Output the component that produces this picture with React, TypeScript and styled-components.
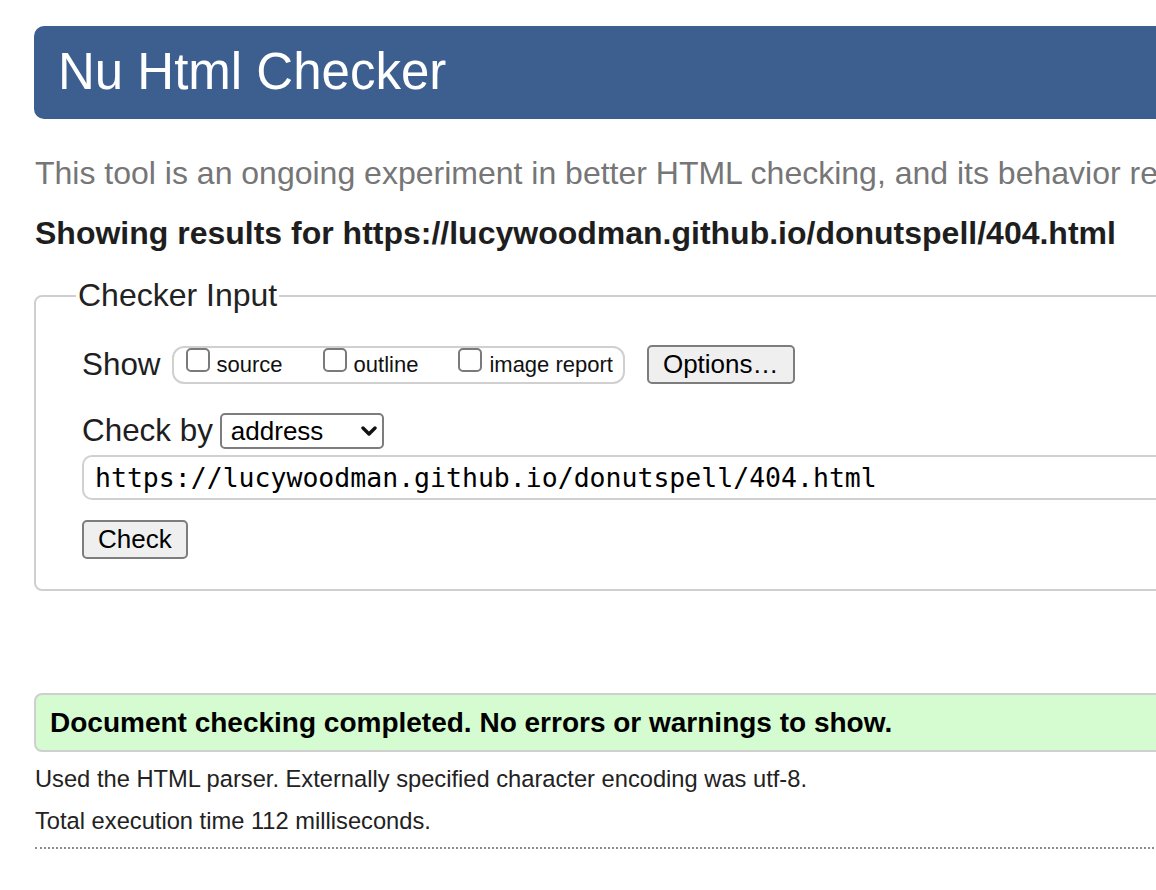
import styled, { createGlobalStyle } from "styled-components";

const GlobalStyle = createGlobalStyle`
  html, body {
    margin: 0;
    padding: 0;
    background: #fff;
    overflow: hidden;
  }
  body {
    font-family: "Liberation Sans", Arial, Helvetica, sans-serif;
    color: #222;
  }
`;

const Page = styled.div`
  width: 1400px;
  padding: 26px 0 0 34px;
  display: flex;
  flex-direction: column;
`;

const Header = styled.h1`
  margin: 0;
  height: 93px;
  display: flex;
  align-items: center;
  padding: 0 0 2px 24px;
  box-sizing: border-box;
  background: #3d5f90;
  border-radius: 10px;
  color: #fff;
  font-size: 51px;
  font-weight: 400;
`;

const Intro = styled.p`
  margin: 34px 0 0 1px;
  font-size: 32px;
  line-height: 40px;
  color: #767676;
  white-space: nowrap;
`;

const ResultsFor = styled.h2`
  margin: 20px 0 0 1px;
  font-size: 32px;
  line-height: 40px;
  font-weight: 700;
  color: #1e1e1e;
  white-space: nowrap;
`;

const Fieldset = styled.fieldset`
  margin: 24px 0 0 0;
  padding: 31px 0 30px 46px;
  border: 2px solid #cfcfcf;
  border-radius: 8px;
  display: flex;
  flex-direction: column;
  min-width: 0;
`;

const Legend = styled.legend`
  padding: 0 2px;
  margin-left: -6px;
  font-size: 32px;
  line-height: 37px;
  color: #222;
`;

const Row = styled.div<{ $gap: number; $top?: number }>`
  display: flex;
  align-items: center;
  gap: ${({ $gap }) => $gap}px;
  margin-top: ${({ $top }) => $top ?? 0}px;
`;

const RowLabel = styled.span`
  font-size: 31.4px;
  line-height: 38px;
  color: #1e1e1e;
`;

const ShowGroup = styled.div`
  display: flex;
  align-items: center;
  height: 38px;
  box-sizing: border-box;
  border: 2px solid #d0d0d0;
  border-radius: 12px;
  padding: 0 10px 0 12px;
  gap: 40px;
`;

const CheckLabel = styled.label`
  display: flex;
  align-items: center;
  gap: 7px;
  font-size: 22px;
  line-height: 34px;
  color: #111;
`;

const Checkbox = styled.input.attrs({ type: "checkbox" })`
  appearance: none;
  margin: 0;
  align-self: flex-start;
  width: 24px;
  height: 24px;
  box-sizing: border-box;
  border: 2px solid #7a7a7a;
  border-radius: 5px;
  background: #fff;
`;

const Button = styled.button<{ $left?: number }>`
  font-family: "Liberation Sans", Arial, sans-serif;
  font-size: 26px;
  height: 39px;
  margin-left: ${({ $left }) => $left ?? 0}px;
  padding: 0 14px;
  background: #efefef;
  border: 2px solid #7d7d7d;
  border-radius: 5px;
  color: #000;
`;

const SelectWrap = styled.div`
  position: relative;
  display: flex;
`;

const Select = styled.select`
  appearance: none;
  font-family: "Liberation Sans", Arial, sans-serif;
  font-size: 26px;
  width: 164px;
  height: 36px;
  padding: 0 0 0 9px;
  border: 2px solid #7d7d7d;
  border-radius: 5px;
  background: #fff;
  color: #000;
`;

const Chevron = styled.svg`
  position: absolute;
  right: 7px;
  top: 13px;
  pointer-events: none;
`;

const UrlInput = styled.input`
  margin-top: 5px;
  height: 45px;
  box-sizing: border-box;
  border: 2px solid #d0d0d0;
  border-radius: 10px;
  padding: 0 0 0 11px;
  font-family: "DejaVu Sans Mono", Menlo, monospace;
  font-size: 26.5px;
  color: #000;
  background: #fff;
`;

const CheckRow = styled.div`
  margin-top: 20px;
  display: flex;
`;

const Notice = styled.div`
  margin-top: 102px;
  height: 59px;
  box-sizing: border-box;
  display: flex;
  align-items: center;
  padding: 0 0 0 14px;
  background: #d5fbd1;
  border: 2px solid #cfcfcf;
  border-radius: 8px;
  font-size: 28px;
  font-weight: 700;
  color: #000;
`;

const Detail = styled.p<{ $top: number }>`
  margin: ${({ $top }) => $top}px 0 0 1px;
  font-size: 23.7px;
  line-height: 30px;
  color: #222;
`;

const Rule = styled.hr`
  margin: 11px 0 0 1px;
  border: 0;
  border-top: 2px dotted #8c8c8c;
  height: 0;
`;

export default function App() {
  return (
    <>
      <GlobalStyle />
      <Page>
        <Header>Nu Html Checker</Header>
        <Intro>
          This tool is an ongoing experiment in better HTML checking, and its
          behavior remains subject to change
        </Intro>
        <ResultsFor>
          Showing results for https://lucywoodman.github.io/donutspell/404.html
        </ResultsFor>

        <Fieldset>
          <Legend>Checker Input</Legend>
          <Row $gap={11}>
            <RowLabel>Show</RowLabel>
            <ShowGroup>
              <CheckLabel>
                <Checkbox />
                source
              </CheckLabel>
              <CheckLabel>
                <Checkbox />
                outline
              </CheckLabel>
              <CheckLabel>
                <Checkbox />
                image report
              </CheckLabel>
            </ShowGroup>
            <Button $left={11}>Options…</Button>
          </Row>

          <Row $gap={7} $top={28}>
            <RowLabel>Check by</RowLabel>
            <SelectWrap>
              <Select defaultValue="address">
                <option value="address">address</option>
                <option value="file">file upload</option>
                <option value="text">text input</option>
              </Select>
              <Chevron width="16" height="10" viewBox="0 0 16 10">
                <path
                  d="M2 2l6 6 6-6"
                  fill="none"
                  stroke="#111"
                  strokeWidth="3.4"
                  strokeLinecap="round"
                  strokeLinejoin="round"
                />
              </Chevron>
            </SelectWrap>
          </Row>

          <UrlInput defaultValue="https://lucywoodman.github.io/donutspell/404.html" />

          <CheckRow>
            <Button>Check</Button>
          </CheckRow>
        </Fieldset>

        <Notice>Document checking completed. No errors or warnings to show.</Notice>
        <Detail $top={12}>
          Used the HTML parser. Externally specified character encoding was
          utf-8.
        </Detail>
        <Detail $top={12}>Total execution time 112 milliseconds.</Detail>
        <Rule />
      </Page>
    </>
  );
}
